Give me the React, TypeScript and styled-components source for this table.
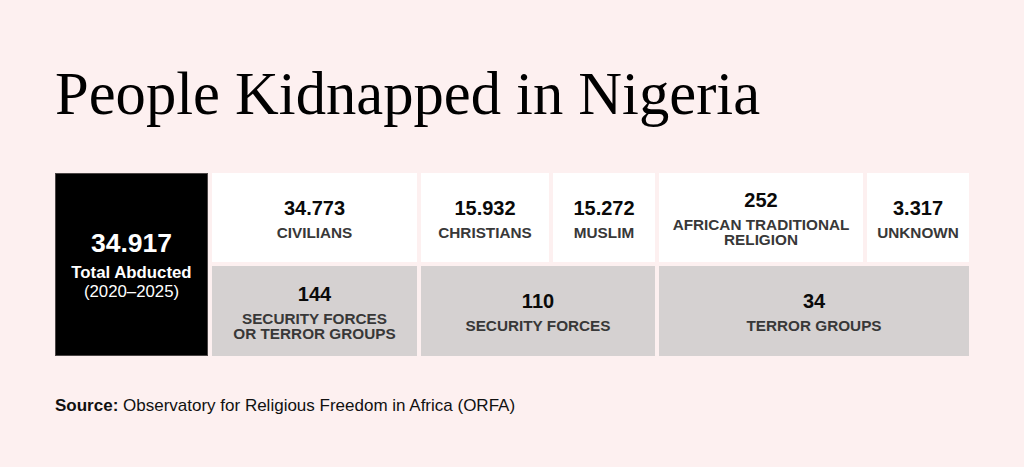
import React from "react";
import styled, { createGlobalStyle } from "styled-components";

const Global = createGlobalStyle`
  html, body { margin: 0; padding: 0; background: #fdf0f0; }
  body { font-family: "Liberation Sans", Arial, sans-serif; }
`;

const Page = styled.div`
  width: 1024px;
  height: 467px;
  box-sizing: border-box;
  padding: 64px 55px 0 55px;
  background: #fdf0f0;
`;

const Title = styled.h1`
  margin: 0 0 49px 0;
  font-family: "Liberation Serif", "Times New Roman", serif;
  font-weight: 400;
  font-size: 60.6px;
  line-height: 60px;
  color: #000;
`;

const Grid = styled.div`
  display: grid;
  grid-template-columns: 153px 205px 128px 102px 204px 102px;
  grid-template-rows: 89px 90px;
  gap: 4px;
`;

const TotalCell = styled.div`
  grid-row: 1 / span 2;
  grid-column: 1;
  background: #000;
  border: 1px solid #4a4545;
  color: #fff;
  display: flex;
  flex-direction: column;
  align-items: center;
  justify-content: center;
  text-align: center;
`;

const TotalNumber = styled.div`
  font-weight: 700;
  font-size: 26.5px;
  line-height: 30px;
  margin-bottom: 5px;
`;

const TotalLabel = styled.div<{ $bold?: boolean }>`
  font-weight: ${(p) => (p.$bold ? 700 : 400)};
  font-size: 16.8px;
  line-height: 19px;
`;

const Cell = styled.div<{ $tone: "white" | "gray"; $span?: number }>`
  background: ${(p) => (p.$tone === "white" ? "#ffffff" : "#d5d1d1")};
  grid-column: span ${(p) => p.$span ?? 1};
  display: flex;
  flex-direction: column;
  align-items: center;
  justify-content: center;
  text-align: center;
`;

const Num = styled.div`
  font-weight: 700;
  font-size: 20px;
  line-height: 24px;
  color: #0a0a0a;
  margin-bottom: 5px;
`;

const Label = styled.div`
  font-weight: 700;
  font-size: 15.3px;
  line-height: 15px;
  color: #383838;
  text-transform: uppercase;
`;

const Source = styled.p`
  margin: 40px 0 0 0;
  font-size: 17px;
  line-height: 20px;
  color: #111;
  b { font-weight: 700; }
`;

type Item = { n: string; l: React.ReactNode; tone: "white" | "gray"; span?: number };

const items: Item[] = [
  { n: "34.773", l: "Civilians", tone: "white" },
  { n: "15.932", l: "Christians", tone: "white" },
  { n: "15.272", l: "Muslim", tone: "white" },
  { n: "252", l: <>African Traditional<br />Religion</>, tone: "white" },
  { n: "3.317", l: "Unknown", tone: "white" },
  { n: "144", l: <>Security Forces<br />or Terror Groups</>, tone: "gray" },
  { n: "110", l: "Security Forces", tone: "gray", span: 2 },
  { n: "34", l: "Terror Groups", tone: "gray", span: 2 },
];

export default function App() {
  return (
    <>
      <Global />
      <Page>
        <Title>People Kidnapped in Nigeria</Title>
        <Grid>
          <TotalCell>
            <TotalNumber>34.917</TotalNumber>
            <TotalLabel $bold>Total Abducted</TotalLabel>
            <TotalLabel>(2020–2025)</TotalLabel>
          </TotalCell>
          {items.map((it, i) => (
            <Cell key={i} $tone={it.tone} $span={it.span}>
              <Num>{it.n}</Num>
              <Label>{it.l}</Label>
            </Cell>
          ))}
        </Grid>
        <Source>
          <b>Source:</b> Observatory for Religious Freedom in Africa (ORFA)
        </Source>
      </Page>
    </>
  );
}
